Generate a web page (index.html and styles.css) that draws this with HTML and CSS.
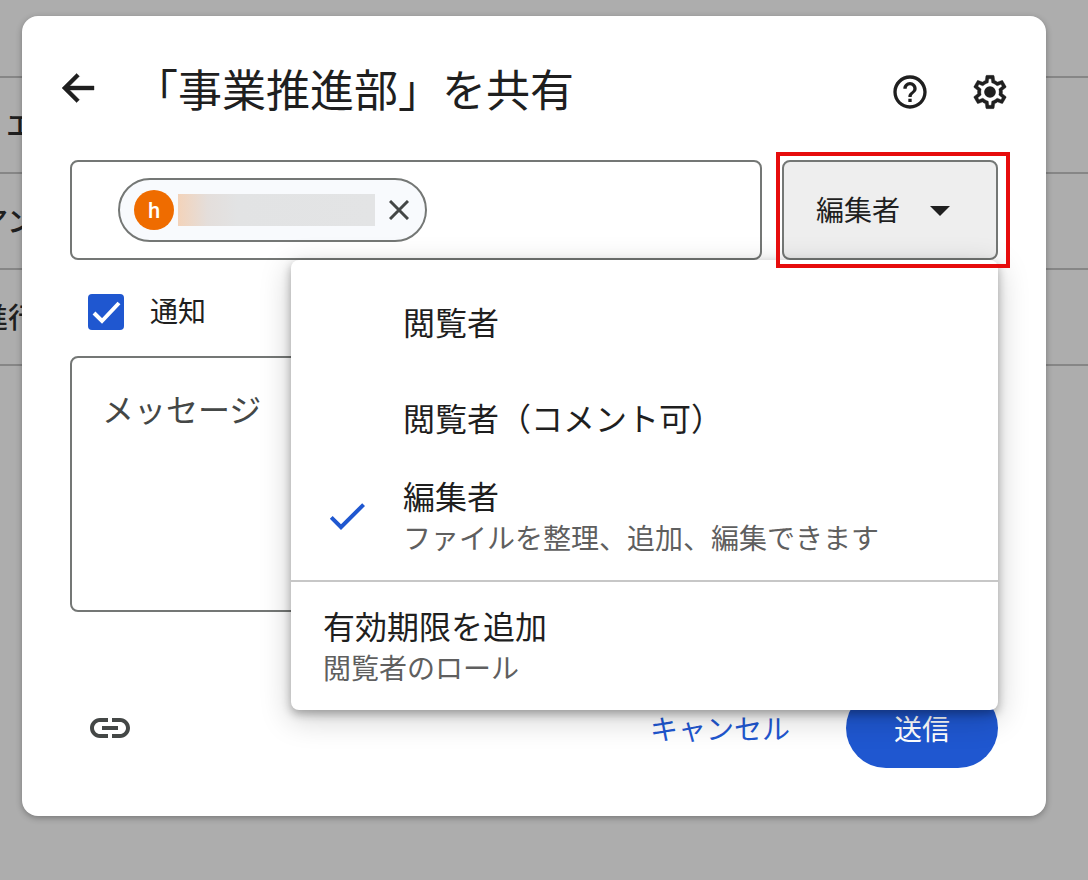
FILE: index.html
```html
<!DOCTYPE html>
<html lang="ja">
<head>
  <meta charset="UTF-8">
  <meta name="viewport" content="width=device-width, initial-scale=1.0">
  <title>「事業推進部」を共有</title>
  <link rel="stylesheet" href="styles.css">
</head>
<body>

  <!-- File list under the dialog -->
  <ul class="file-list">
    <li class="file-row indent">エ</li>
    <li class="file-row">アン</li>
    <li class="file-row">進行</li>
    <li class="file-row"></li>
  </ul>

  <form class="dialog" role="dialog" aria-labelledby="dialogTitle">
    <header class="dialog-header">
      <button type="button" class="icon-btn" aria-label="戻る">
        <svg width="48" height="48" viewBox="0 0 24 24" fill="currentColor"><path stroke="currentColor" stroke-width=".2" d="M20 11H7.83l4.88-4.88L11.3 4.7 4 12l7.3 7.3 1.41-1.42L7.83 13H20z"/></svg>
      </button>
      <h1 id="dialogTitle">「事業推進部」を共有</h1>
      <div class="header-actions">
        <button type="button" class="icon-btn" aria-label="ヘルプ">
          <svg width="40" height="40" viewBox="0 0 24 24" fill="currentColor"><path d="M11 18h2v-2h-2v2zm1-16C6.480 2 2 6.480 2 12s4.480 10 10 10 10-4.480 10-10S17.520 2 12 2zm0 18c-4.410 0-8-3.590-8-8s3.590-8 8-8 8 3.590 8 8-3.590 8-8 8zm0-14c-2.210 0-4 1.790-4 4h2c0-1.100.9-2 2-2s2 .9 2 2c0 2-3 1.750-3 5h2c0-2.250 3-2.500 3-5 0-2.210-1.790-4-4-4z"/></svg>
        </button>
        <button type="button" class="icon-btn" aria-label="設定">
          <svg width="40" height="40" viewBox="0 0 24 24" fill="currentColor"><path stroke="currentColor" stroke-width=".2" d="M19.430 12.980c.04-.32.07-.64.07-.98 0-.34-.03-.66-.07-.98l2.110-1.650c.19-.15.24-.42.12-.64l-2-3.460c-.09-.16-.26-.25-.44-.25-.06 0-.12.01-.17.03l-2.490 1c-.52-.4-1.080-.73-1.690-.98l-.38-2.650C14.460 2.180 14.250 2 14 2h-4c-.25 0-.46.18-.49.42l-.38 2.650c-.61.25-1.170.59-1.690.98l-2.490-1c-.06-.02-.12-.03-.18-.03-.17 0-.34.09-.43.25l-2 3.460c-.13.22-.07.49.12.64l2.110 1.650c-.04.32-.07.65-.07.98 0 .33.03.66.07.98l-2.110 1.650c-.19.15-.24.42-.12.64l2 3.460c.09.16.26.25.44.25.06 0 .12-.01.17-.03l2.490-1c.52.4 1.080.73 1.690.98l.38 2.650c.03.24.24.42.49.42h4c.25 0 .46-.18.49-.42l.38-2.650c.61-.25 1.170-.59 1.690-.98l2.490 1c.06.02.12.03.18.03.17 0 .34-.09.43-.25l2-3.460c.12-.22.07-.49-.12-.64l-2.110-1.650zm-1.980-1.710c.04.31.05.52.05.73 0 .21-.02.43-.05.73l-.14 1.130.89.7 1.080.84-.7 1.210-1.270-.51-1.040-.42-.9.68c-.43.32-.84.56-1.250.73l-1.060.43-.16 1.130-.2 1.350h-1.400l-.19-1.350-.16-1.130-1.060-.43c-.43-.18-.83-.41-1.230-.71l-.91-.7-1.060.43-1.270.51-.7-1.210 1.080-.84.89-.7-.14-1.130c-.03-.31-.05-.54-.05-.74s.02-.43.05-.73l.14-1.130-.89-.7-1.080-.84.7-1.210 1.270.51 1.040.42.9-.68c.43-.32.84-.56 1.250-.73l1.060-.43.16-1.130.2-1.350h1.390l.19 1.350.16 1.130 1.060.43c.43.18.83.41 1.230.71l.91.7 1.060-.43 1.270-.51.7 1.210-1.070.85-.89.7.14 1.130z"/><circle cx="12" cy="12" r="3.500"/></svg>
        </button>
      </div>
    </header>

    <div class="dialog-body">
      <div class="share-row">
        <div class="recipients">
          <div class="chip">
            <span class="avatar">h</span>
            <span class="chip-name"></span>
            <button type="button" class="icon-btn chip-remove" aria-label="削除">
              <svg width="20" height="20" viewBox="0 0 20 20" fill="none" stroke="currentColor" stroke-width="3"><path d="M1 1l18 18M19 1L1 19"/></svg>
            </button>
          </div>
          <input type="text" class="recipient-input" aria-label="ユーザーを追加">
        </div>

        <div class="role">
          <select class="role-select" aria-label="権限">
            <option>閲覧者</option>
            <option>閲覧者（コメント可）</option>
            <option selected>編集者</option>
          </select>
          <svg class="role-arrow" width="20" height="10" viewBox="0 0 20 10"><path d="M0 0h20L10 10z" fill="currentColor"/></svg>

          <!-- Opened role menu -->
          <div class="menu" role="menu">
            <div class="menu-group">
              <button type="button" class="menu-item single" role="menuitemradio" aria-checked="false">
                <span class="menu-check"></span>
                <span class="menu-text">閲覧者</span>
              </button>
              <button type="button" class="menu-item single" role="menuitemradio" aria-checked="false">
                <span class="menu-check"></span>
                <span class="menu-text">閲覧者（コメント可）</span>
              </button>
              <button type="button" class="menu-item" role="menuitemradio" aria-checked="true">
                <span class="menu-check">
                  <svg width="48" height="48" viewBox="0 0 24 24" fill="currentColor"><path d="M9 16.170L4.830 12l-1.420 1.410L9 19 21 7l-1.410-1.410z"/></svg>
                </span>
                <span class="menu-text">編集者<small>ファイルを整理、追加、編集できます</small></span>
              </button>
            </div>
            <div class="menu-group">
              <button type="button" class="menu-item" role="menuitem">
                <span class="menu-text">有効期限を追加<small>閲覧者のロール</small></span>
              </button>
            </div>
          </div>
          <div class="highlight"></div>
        </div>
      </div>

      <div class="notify">
        <input type="checkbox" id="notify" checked>
        <label for="notify">通知</label>
      </div>

      <textarea class="message" name="message" aria-label="メッセージ" placeholder="メッセージ"></textarea>

      <footer class="dialog-footer">
        <button type="button" class="icon-btn link-btn" aria-label="リンクをコピー">
          <svg width="48" height="48" viewBox="0 0 24 24" fill="currentColor"><path d="M4 12c0-1.660 1.340-3 3-3h4V7H7c-2.760 0-5 2.240-5 5s2.240 5 5 5h4v-2H7c-1.660 0-3-1.340-3-3zM8 13h8v-2H8v2zm9-6h-4v2h4c1.660 0 3 1.340 3 3s-1.340 3-3 3h-4v2h4c2.760 0 5-2.240 5-5s-2.240-5-5-5z"/></svg>
        </button>
        <button type="button" class="cancel-btn">キャンセル</button>
        <button type="submit" class="send-btn">送信</button>
      </footer>
    </div>
  </form>

</body>
</html>
```
FILE: styles.css
```css
* {
  box-sizing: border-box;
}

body {
  margin: 0;
  padding: 16px 42px 64px 22px;
  background: #adadad;
  color: #1f1f1f;
  font-family: "Noto Sans CJK JP", sans-serif;
  font-size: 28px;
}

button, input, select, textarea {
  font: inherit;
  color: inherit;
}

button {
  padding: 0;
  border: none;
  background: none;
  cursor: pointer;
}

svg {
  display: block;
}

.file-list {
  position: absolute;
  top: 76px;
  left: 0;
  right: 0;
  margin: 0;
  padding: 0;
  list-style: none;
  overflow: hidden;
}

.file-row {
  height: 96px;
  border-top: 2px solid #868686;
  line-height: 92px;
  font-weight: 500;
  text-indent: -20px;
}

.file-row.indent {
  text-indent: 6px;
}

.file-row:last-child {
  height: 2px;
}

.dialog {
  position: relative;
  padding: 48px 0;
  background: #fff;
  border-radius: 16px;
  box-shadow: 0 2px 6px rgba(0, 0, 0, 0.3);
}

.dialog-header {
  display: flex;
  align-items: flex-end;
  padding: 0 36px 48px 32px;
}

.dialog-header h1 {
  flex: 1;
  margin: 0 0 0 32px;
  font-size: 44px;
  font-weight: 400;
  line-height: 48px;
}

.header-actions {
  display: flex;
  gap: 40px;
}

.dialog-body {
  padding: 0 48px;
}

.share-row {
  display: flex;
  gap: 20px;
  height: 100px;
}

.recipients {
  flex: 1;
  min-width: 0;
  display: flex;
  align-items: center;
  padding: 0 46px;
  border: 2px solid #747775;
  border-radius: 8px;
}

.chip {
  display: flex;
  align-items: center;
  height: 64px;
  padding: 0 16px 0 14px;
  background: #f8fafd;
  border: 2px solid #747775;
  border-radius: 32px;
}

.avatar {
  width: 40px;
  height: 40px;
  border-radius: 50%;
  background: #ef6c00;
  color: #fff;
  font-family: Roboto, sans-serif;
  font-size: 22px;
  font-weight: 500;
  line-height: 42px;
  text-align: center;
}

.chip-name {
  width: 197px;
  height: 32px;
  margin: 0 14px 0 4px;
  background: linear-gradient(90deg, #f3d3ba, #e4dedb 15%, #e2e3e4 30%, #e3e4e5);
}

.chip-remove {
  color: #444746;
}

.recipient-input {
  flex: 1;
  min-width: 0;
  margin-left: 16px;
  border: none;
  outline: none;
  background: none;
}

.role {
  position: relative;
  flex: 0 0 216px;
}

.role-select {
  width: 100%;
  height: 100%;
  padding: 0 32px 2px;
  appearance: none;
  background: #eee;
  border: 2px solid #747775;
  border-radius: 8px;
}

.role-arrow {
  position: absolute;
  top: 46px;
  right: 48px;
  pointer-events: none;
}

.menu {
  position: absolute;
  top: 100%;
  right: 0;
  width: 707px;
  background: #fff;
  border-radius: 8px;
  box-shadow: 0 4px 10px rgba(0, 0, 0, 0.3), 0 8px 30px 2px rgba(0, 0, 0, 0.18);
}

.menu-group {
  padding: 16px 0;
}

.menu-group + .menu-group {
  border-top: 2px solid #c7c7c7;
}

.menu-item {
  display: flex;
  align-items: center;
  width: 100%;
  height: 96px;
  padding: 0 32px;
  text-align: left;
}

.menu-item.single {
  padding-bottom: 6px;
}

.menu-check {
  width: 80px;
  color: #1f57d0;
}

.menu-text {
  font-size: 32px;
  line-height: 42px;
}

.menu-text small {
  display: block;
  color: #5f5f5f;
  font-size: 28px;
}

/* red frame around the role button */
.highlight {
  position: absolute;
  top: -8px;
  right: -12px;
  bottom: -8px;
  left: -6px;
  border: 4px solid #e60c0c;
  pointer-events: none;
}

.notify {
  display: flex;
  align-items: center;
  gap: 26px;
  height: 96px;
  padding: 8px 18px 0;
}

.notify label {
  padding-bottom: 4px;
}

.notify input {
  width: 36px;
  height: 36px;
  margin: 0;
  appearance: none;
  border-radius: 4px;
  background: #1f57d0 url("data:image/svg+xml,%3Csvg xmlns='http://www.w3.org/2000/svg' viewBox='0 0 36 36'%3E%3Cpath d='M6 19l8 8L31 9' fill='none' stroke='white' stroke-width='4'/%3E%3C/svg%3E");
}

.message {
  display: block;
  width: 100%;
  height: 256px;
  padding: 30px;
  border: 2px solid #747775;
  border-radius: 8px;
  font-size: 32px;
  line-height: 40px;
  resize: none;
}

.message::placeholder {
  color: #444746;
  opacity: 1;
}

.dialog-footer {
  display: flex;
  align-items: center;
  gap: 56px;
  margin-top: 76px;
}

.link-btn {
  margin: 0 auto 0 16px;
  color: #444746;
}

.cancel-btn {
  color: #1f57d0;
}

.send-btn {
  height: 80px;
  padding: 0 48px;
  border-radius: 40px;
  background: #1f57d0;
  color: #fff;
}
```
